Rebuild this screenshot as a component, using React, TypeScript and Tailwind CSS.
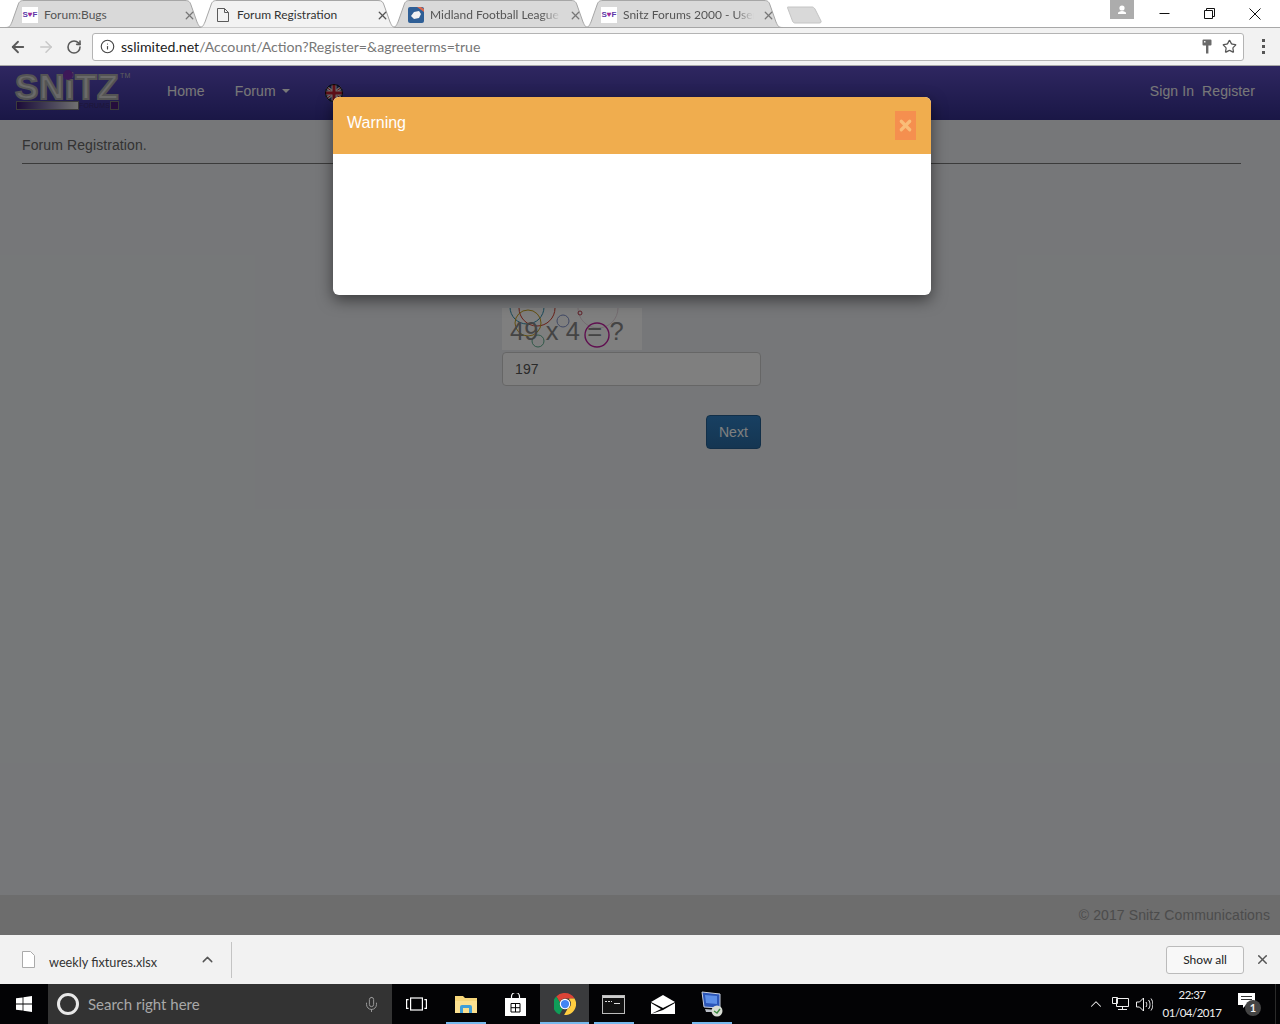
import { ArrowLeft, ArrowRight, ChevronUp, Info, Mic, RotateCw, Star, X } from 'lucide-react'

type TabProp = {
  title: string
  active?: boolean
  icon: React.ReactNode
  fade?: boolean
}

const SnitzIcon = () => (
  <div className="w-4 h-4 bg-white flex items-center justify-center shrink-0">
    <span className="font-['Liberation_Sans',sans-serif] font-bold text-[8px] leading-none text-[#5b3aa8]">S<span className="text-[#a02a9a]">&#9829;</span>F</span>
  </div>
)

const PageIcon = () => (
  <div className="w-4 h-4 flex items-center justify-center shrink-0">
    <svg width="12" height="14" viewBox="0 0 12 14" fill="none" stroke="#5a5a5a">
      <path d="M.5.5h7l4 4v9H.5z" />
      <path d="M7.500.5v4h4" />
    </svg>
  </div>
)

const LeagueIcon = () => (
  <svg width="16" height="16" viewBox="0 0 16 16" className="shrink-0">
    <rect width="16" height="16" rx="2" fill="#2f5f96" />
    <path d="M3 9l3-4 5-1 2 3-2 4-5 1z" fill="#f2f2f2" />
    <path d="M9 0l7 5V2l-3-2z" fill="#d9694f" />
  </svg>
)

const Tab = ({ title, active, icon, fade }: TabProp) => (
  <div className={`relative h-7 w-[199px] -ml-[6px] -mb-px flex items-center pl-[17px] pr-[8.5px] ${active ? 'z-10' : ''}`}>
    <svg width="199" height="28" viewBox="0 0 199 28" className="absolute inset-0">
      <path d={`M0 27.500 C5 27.500 5 26 7 22 L13 5 C14 2 15 .5 19 .5 H180 C184 .5 185 2 186 5 L192 22 C194 26 194 27.500 199 27.500 ${active ? '' : 'Z'}`} fill={active ? '#f2f2f2' : '#d9d9d9'} stroke="#a6a6a6" />
    </svg>
    <div className="relative flex items-center w-full mt-[2px]">
      {icon}
      <div className={`ml-[6px] flex-1 overflow-hidden whitespace-nowrap text-[12px] ${active ? 'text-[#333]' : 'text-[#555]'} ${fade ? '[mask-image:linear-gradient(to_right,black_85%,transparent_100%)]' : ''}`}>
        {title}
      </div>
      <X size={13} strokeWidth={2.4} className={`shrink-0 ml-2 ${active ? 'text-[#555]' : 'text-[#777]'}`} />
    </div>
  </div>
)

const KeyIcon = () => (
  <svg width="10" height="15" viewBox="0 0 10 15" fill="#6a6a6a">
    <path d="M1.500.5h7a1 1 0 011 1v4a1 1 0 01-1 1H6.400v8H4v-8H1.500a1 1 0 01-1-1v-4a1 1 0 011-1z" />
    <rect x="2" y="2" width="1.500" height="1.500" fill="#f2f2f2" />
  </svg>
)

const Captcha = () => (
  <svg width="140" height="42" viewBox="0 0 140 42" className="block bg-white" fill="none">
    <circle cx="96" cy="0" r="20" stroke="#e8d8e0" />
    <circle cx="25" cy="-1" r="17" stroke="#2f8fb0" />
    <circle cx="35" cy="0" r="18" stroke="#d04030" />
    <circle cx="26" cy="15" r="13" stroke="#c8a020" />
    <circle cx="36" cy="33" r="6" stroke="#60b090" />
    <circle cx="61" cy="13" r="6" stroke="#7f8fc8" />
    <circle cx="78" cy="5" r="2" stroke="#c04050" />
    <circle cx="95" cy="27" r="12" stroke="#c020a0" strokeWidth="1.400" />
    <text x="8" y="32" fontFamily="'Liberation Sans', sans-serif" fontSize="25.500" fill="#888">49 x 4 = ?</text>
  </svg>
)

const FlagIcon = () => (
  <svg width="18" height="18" viewBox="0 0 18 18">
    <clipPath id="flag"><circle cx="9" cy="9" r="9" /></clipPath>
    <g clipPath="url(#flag)">
      <rect width="18" height="18" fill="#22337a" />
      <path d="M0 2l18 14M18 2L0 16" stroke="#ddd" strokeWidth="3" />
      <path d="M0 2l18 14M18 2L0 16" stroke="#c02030" strokeWidth="1" />
      <path d="M9 0v18M0 9h18" stroke="#ddd" strokeWidth="5" />
      <path d="M9 0v18M0 9h18" stroke="#c02030" strokeWidth="3" />
    </g>
    <circle cx="9" cy="9" r="8.500" fill="none" stroke="#111" />
  </svg>
)

const Logo = () => (
  <div className="relative w-[113px] h-[37px] font-['Liberation_Sans',sans-serif]">
    <div className="text-[35px] leading-[28px] font-bold text-[#d4d4d4] tracking-[0.6px] [-webkit-text-stroke:2px_#a8a8a8]">SNiTZ</div>
    <span className="absolute left-[48px] -top-[3px] w-[10px] h-[10px] rounded-full bg-[#7a30b0]" />
    <span className="absolute left-[105px] -top-[1px] text-[7px] leading-none text-[#bbb]">TM</span>
    <div className="flex items-center ml-px">
      <div className="w-[63px] h-[9px] border border-[#777] bg-gradient-to-r from-[#3a1570] to-[#e0e0e0]" />
      <span className="w-[31px] text-[7px] leading-none text-center text-[#3a2a70]">FORUMS</span>
      <div className="w-[9px] h-[9px] bg-[#4b1a78] border border-[#777]" />
    </div>
  </div>
)

const Site = () => (
  <div className="relative flex-1 flex flex-col bg-[#eceff2] font-['Liberation_Sans',sans-serif] text-[14px] leading-5 tracking-[0.1px]">
    <div className="h-[54px] pb-[4px] flex items-center bg-gradient-to-b from-[#5e4ec2] to-[#342e8c] text-[#f0f0f0]">
      <div className="ml-[15px] w-[152px]"><Logo /></div>
      <span>Home</span>
      <span className="ml-[30px]">Forum</span>
      <span className="ml-[6px] w-0 h-0 border-x-4 border-x-transparent border-t-4 border-t-[#f0f0f0]" />
      <div className="ml-[35px] mt-[4px]"><FlagIcon /></div>
      <span className="ml-auto">Sign In</span>
      <span className="ml-2 mr-[25px]">Register</span>
    </div>
    <div className="mx-[22px] w-[1219px] pt-[15px] pb-2 border-b border-[#777] text-[#666]">Forum Registration.</div>
    <div className="ml-[502px] w-[259px] mt-[144px] flex flex-col">
      <Captcha />
      <input readOnly value="197" className="mt-[2px] h-[34px] px-3 rounded border border-[#ccc] bg-white text-[#555] outline-none" />
      <button className="self-end mt-[29px] h-[34px] w-[55px] rounded border border-[#245f90] bg-gradient-to-b from-[#3080c4] to-[#2a6ca4] text-white">Next</button>
    </div>
    <div className="mt-auto h-10 flex items-center justify-end pr-[10px] bg-[#dadada] text-[#999]">© 2017 Snitz Communications</div>

    <div className="absolute inset-0 bg-black/50">
      <div className="ml-[333px] mt-[31px] w-[598px] h-[198px] bg-white rounded-md overflow-hidden shadow-[0_5px_15px_rgba(0,0,0,0.5)]">
        <div className="h-[57px] flex items-center justify-between pl-[14px] pr-[15px] bg-[#f0ad4e] text-white text-[16px] tracking-normal">
          <span className="-mt-[6px]">Warning</span>
          <button className="w-[21px] h-[29px] -mt-[1px] flex items-center justify-center bg-[#f58f4f]">
            <X size={17} strokeWidth={4.5} className="text-[#f9bd78]" />
          </button>
        </div>
      </div>
    </div>
  </div>
)

const TaskSlot = ({ children, bar, active }: { children: React.ReactNode; bar?: boolean; active?: boolean }) => (
  <div className={`relative w-[49.300px] h-10 flex items-center justify-center ${active ? 'bg-[#3a3b3d]' : ''}`}>
    {children}
    {bar && <span className={`absolute bottom-0 h-[2px] bg-[#76b9ed] ${active ? 'inset-x-0' : 'w-10'}`} />}
  </div>
)

const Taskbar = () => (
  <div className="h-10 flex items-center bg-[#030305] font-['Lato',sans-serif]">
    <div className="w-12 flex justify-center">
      <svg width="16" height="16" viewBox="0 0 16 16" fill="#fff">
        <path d="M0 2.300l6.600-.9v6.200H0zM7.400 1.300L16 0v7.600H7.400zM0 8.400h6.600v6.200L0 13.700zM7.400 8.400H16V16l-8.600-1.200z" />
      </svg>
    </div>
    <div className="w-[344px] h-10 flex items-center bg-[#333] pl-[9px] pr-[12px]">
      <div className="w-[22px] h-[22px] rounded-full border-[3px] border-[#e8e8e8]" />
      <span className="ml-[9px] text-[15px] text-[#a8a8a8]">Search right here</span>
      <Mic size={17} strokeWidth={1.300} className="ml-auto text-[#a0a0a0]" />
    </div>
    <TaskSlot>
      <svg width="21" height="14" viewBox="0 0 21 14" fill="none" stroke="#fff" strokeWidth="1.200">
        <rect x="4.600" y="1" width="11.800" height="12" />
        <path d="M2.600 2.600H.6v8.800h2M18.400 2.600h2v8.800h-2" />
      </svg>
    </TaskSlot>
    <TaskSlot bar>
      <svg width="22" height="18" viewBox="0 0 22 18">
        <path d="M0 1h8l2 2h12v15H0z" fill="#f6d67a" />
        <path d="M0 6h22v12H0z" fill="#fbe08f" />
        <path d="M5 18v-6a2 2 0 012-2h8a2 2 0 012 2v6h-3v-5H8v5z" fill="#3f9fd8" />
      </svg>
    </TaskSlot>
    <TaskSlot>
      <svg width="21" height="23" viewBox="0 0 21 23" fill="#fff">
        <path d="M6.500 5V3.500a4 4 0 018 0V5" fill="none" stroke="#fff" strokeWidth="1.200" />
        <path d="M0 5h21v18H0z" />
        <path d="M6 10.500h9v8.500H6zM10.500 10.500V19M6 14.700h9" fill="none" stroke="#050505" />
      </svg>
    </TaskSlot>
    <TaskSlot active bar>
      <svg width="22" height="22" viewBox="0 0 48 48">
        <path d="M24 0a24 24 0 0 1 20.800 12H24a12 12 0 0 0-11.300 8L5 7.500A24 24 0 0 1 24 0z" fill="#db4437" />
        <path d="M5 7.500l8 13.200a12 12 0 0 0 6 14L12 47A24 24 0 0 1 5 7.500z" fill="#0f9d58" />
        <path d="M44.800 12A24 24 0 0 1 22 48l8-14a12 12 0 0 0 3-20l.5-2z" fill="#ffcd40" />
        <circle cx="24" cy="24" r="11.500" fill="#fff" />
        <circle cx="24" cy="24" r="9" fill="#4285f4" />
      </svg>
    </TaskSlot>
    <TaskSlot bar>
      <svg width="23" height="19" viewBox="0 0 23 19">
        <rect x=".5" y=".5" width="22" height="18" fill="#111" stroke="#bbb" />
        <path d="M1 1h21v2H1z" fill="#ccc" />
        <path d="M3 6h2v1H3zM6 6h2v1H6zM9 6h1v1H9zM12 8h6v1h-6z" fill="#ddd" />
      </svg>
    </TaskSlot>
    <TaskSlot>
      <svg width="24" height="19" viewBox="0 0 24 19" fill="#fff">
        <path d="M12 0L24 7 12 13 0 7z" />
        <path d="M0 8l10 6-10 5zM0 19h24V8L12 15z" />
      </svg>
    </TaskSlot>
    <TaskSlot bar>
      <svg width="24" height="26" viewBox="0 0 24 26">
        <path d="M2 1l18 2v14L4 16z" fill="#2c56b8" stroke="#c8d0e0" />
        <path d="M5 4l12 1v8L6 12z" fill="#5d8fe8" />
        <path d="M5 18l13 1v2H6z" fill="#b8bcc4" />
        <circle cx="17" cy="20" r="5.500" fill="#d8dcd4" />
        <path d="M14 20l3 2 3-4" fill="none" stroke="#3c8a40" strokeWidth="1.400" />
      </svg>
    </TaskSlot>
    <div className="ml-auto flex items-center h-10 text-[#f0f0f0]">
      <ChevronUp size={18} strokeWidth={1.400} />
      <svg width="17" height="14" viewBox="0 0 17 14" fill="none" stroke="#eee" className="ml-[7px]">
        <path d="M4.500 1.500h12v8h-12zM10.500 9.500v3M6 12.500h9M.5.5h5v6h-5z" />
      </svg>
      <svg width="17" height="15" viewBox="0 0 17 15" fill="none" stroke="#eee" className="ml-[7px]">
        <path d="M.5 5h3l4-4v13l-4-4h-3zM10 5c1 1.500 1 3.500 0 5M12.500 3c2 2.500 2 6.500 0 9M15 1.500c2.500 3.500 2.500 8.500 0 12" />
      </svg>
      <div className="ml-[5px] w-[68px] text-center text-[11.500px] tracking-[-0.5px] leading-[18px]">
        <div>22:37</div>
        <div>01/04/2017</div>
      </div>
      <div className="relative ml-[12px] w-[20px] h-[28px]">
        <svg width="17" height="15" viewBox="0 0 17 15" className="absolute top-[3px] left-0" fill="#fff">
          <path d="M0 0h17v12h-9l-3 3v-3H0z" />
          <path d="M3 3h11v1H3zM3 6h11v1H3z" fill="#333" />
        </svg>
        <span className="absolute left-[7px] top-[10px] w-4 h-4 rounded-full bg-[#444] text-[11px] leading-4 text-center font-bold">1</span>
      </div>
      <div className="ml-[17px] mr-[4px] w-px h-10 bg-[#2a2a2a]" />
    </div>
  </div>
)

export default function App() {
  return (
    <div className="w-[1280px] h-[1024px] overflow-hidden flex flex-col bg-white font-['Lato',sans-serif]">
      <div className="h-7 flex items-end bg-white pl-[11px] border-b border-[#a8a8a8]">
        <Tab title="Forum:Bugs" icon={<SnitzIcon />} />
        <Tab title="Forum Registration" icon={<PageIcon />} active />
        <Tab title="Midland Football League" icon={<LeagueIcon />} fade />
        <Tab title="Snitz Forums 2000 - User" icon={<SnitzIcon />} fade />
        <svg width="36" height="18" viewBox="0 0 36 18" className="ml-[4px] mb-[3px]">
          <path d="M1 1h24c1 0 2 .5 3 2l6 12c.5 1.500-.5 2-2 2H8c-1 0-2-.5-2.500-2L1 3C.5 1.500 0 1 1 1z" fill="#d9d9d9" stroke="#c4c4c4" />
        </svg>
        <div className="ml-auto self-start flex items-start h-7 mr-[2px] text-[#222]">
          <div className="w-6 h-[19px] bg-[#acacac] flex items-center justify-center mr-[8px]">
            <svg width="10" height="10" viewBox="0 0 10 10" fill="#fff"><circle cx="5" cy="3" r="2.600" /><path d="M1 8c0-1 2-2 4-2s4 1 4 2v1H1z" /></svg>
          </div>
          <div className="w-[45px] h-[27px] flex items-center justify-center">
            <svg width="11" height="11" viewBox="0 0 11 11" stroke="#111"><path d="M.5 5.500h10" /></svg>
          </div>
          <div className="w-[45px] h-[27px] flex items-center justify-center">
            <svg width="11" height="11" viewBox="0 0 11 11" fill="none" stroke="#111"><path d="M.5 2.500h8v8h-8zM2.500 2.500v-2h8v8h-2" /></svg>
          </div>
          <div className="w-[46px] h-[27px] flex items-center justify-center">
            <svg width="12" height="12" viewBox="0 0 12 12" stroke="#111"><path d="M.5.5l11 11M11.500.5l-11 11" /></svg>
          </div>
        </div>
      </div>

      <div className="h-[38px] flex items-center bg-[#f2f2f2] border-b border-[#a8a8a8] pl-[9px] pr-[15px]">
        <ArrowLeft size={18} strokeWidth={2.400} className="text-[#5a5a5a]" />
        <ArrowRight size={18} strokeWidth={2} className="ml-[10px] text-[#c8c8c8]" />
        <RotateCw size={16} strokeWidth={2.400} className="ml-[11px] text-[#5a5a5a]" />
        <div className="ml-[10px] flex-1 h-[28px] flex items-center bg-white border border-[#b4b4b4] rounded-[3px] pl-[7px] pr-[6px]">
          <Info size={15} strokeWidth={1.800} className="text-[#444]" />
          <span className="ml-[6px] text-[14.150px] text-[#777] whitespace-nowrap"><span className="text-[#222]">sslimited.net</span>/Account/Action?Register=&amp;agreeterms=true</span>
          <div className="ml-auto"><KeyIcon /></div>
          <Star size={15} strokeWidth={2} className="ml-[10px] text-[#555]" />
        </div>
        <div className="ml-[18px] flex flex-col gap-[3px]">
          <span className="w-[3px] h-[3px] bg-[#555]" />
          <span className="w-[3px] h-[3px] bg-[#555]" />
          <span className="w-[3px] h-[3px] bg-[#555]" />
        </div>
      </div>

      <Site />

      <div className="h-[49px] flex items-center bg-[#f2f2f2] pl-[22px] pr-[10px]">
        <svg width="13" height="17" viewBox="0 0 13 17" fill="#fff" stroke="#aaa" className="-mt-px">
          <path d="M.5.5h8l4 4v12H.5z" />
        </svg>
        <span className="ml-[14px] mt-[6px] text-[12.700px] text-[#333] whitespace-nowrap">weekly fixtures.xlsx</span>
        <ChevronUp size={17} strokeWidth={2} className="ml-[41.500px] text-[#555]" />
        <div className="ml-[15px] w-px h-9 bg-[#c4c4c4]" />
        <button className="ml-auto w-[78px] h-[28px] rounded-[3px] border border-[#bbb] bg-[#f8f8f8] text-[12px] text-[#222]">Show all</button>
        <X size={15} strokeWidth={2.400} className="ml-[11px] text-[#555]" />
      </div>

      <Taskbar />
    </div>
  )
}
